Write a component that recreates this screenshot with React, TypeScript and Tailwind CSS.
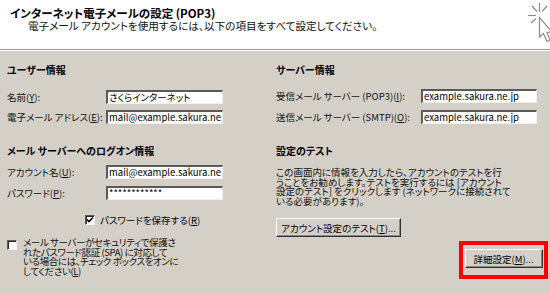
import React from "react";

// Outlook Express style account dialog page (POP3)

function Acc({ children }: { children: React.ReactNode }) {
  return <span className="underline">{children}</span>;
}

function TextBox({ value, width }: { value: string; width: string }) {
  return (
    <div
      className={`${width} h-[14px] bg-white border-t-2 border-l-2 border-t-[#5a5a5a] border-l-[#5a5a5a] border-b border-r border-b-[#f0f0f0] border-r-[#f0f0f0] overflow-hidden whitespace-nowrap pl-[1px] text-[9.5px] leading-[11px] text-black`}
    >
      {value}
    </div>
  );
}

function Field({
  label,
  value,
  labelWidth,
  boxWidth,
}: {
  label: React.ReactNode;
  value: string;
  labelWidth: string;
  boxWidth: string;
}) {
  return (
    <div className="flex items-center h-[14px]">
      <div className={`${labelWidth} shrink-0 whitespace-nowrap text-[9.5px] leading-[14px] text-[#101010]`}>{label}</div>
      <TextBox value={value} width={boxWidth} />
    </div>
  );
}

function CheckBox({ checked }: { checked?: boolean }) {
  return (
    <div className="w-[10px] h-[10px] shrink-0 bg-white border-t border-l border-t-[#5a5a5a] border-l-[#5a5a5a] border-b border-r border-b-[#f4f4f4] border-r-[#f4f4f4] shadow-[inset_1px_1px_0_#2a2a2a] flex items-center justify-center">
      {checked && (
        <svg width="8" height="8" viewBox="0 0 8 8">
          <polyline points="1,3.5 3,5.5 7,1.5" fill="none" stroke="#000" strokeWidth="1.6" />
        </svg>
      )}
    </div>
  );
}

function Button({ children, width }: { children: React.ReactNode; width: string }) {
  return (
    <div
      className={`${width} h-[19px] flex items-center justify-center bg-[#d4d0c8] border border-t-white border-l-white border-b-[#303030] border-r-[#303030] shadow-[inset_-1px_-1px_0_#8a8a8a] text-[9.5px] leading-[12px] text-black whitespace-nowrap`}
    >
      {children}
    </div>
  );
}

function WizardIcon() {
  return (
    <svg width="30" height="46" viewBox="0 0 30 46" className="shrink-0">
      <g stroke="#8c8c8c" strokeWidth="1.2" fill="none">
        <line x1="19.5" y1="3" x2="19.5" y2="12" />
        <line x1="12" y1="6" x2="17" y2="11.5" />
        <line x1="27" y1="6" x2="22" y2="11.5" />
        <line x1="8" y1="15.5" x2="16" y2="15.5" />
        <line x1="11" y1="23" x2="16" y2="18.5" />
        <path d="M19.5 17.5 L19.5 37 L23.5 33.5 L27 41.5 L30 40 L27 32.5 L32 32 Z" fill="#ffffff" />
      </g>
    </svg>
  );
}

export default function App() {
  return (
    <div className="w-[550px] h-[293px] overflow-hidden bg-[#d4d0c8] font-['Noto_Sans_CJK_JP','Noto_Sans',sans-serif] [font-feature-settings:'palt'] text-black">
      {/* header */}
      <div className="h-[50px] bg-white flex justify-between border-b border-b-[#9c9a9c]">
        <div className="pt-[6px]">
          <div className="pl-[10px] text-[11.5px] leading-[14px] font-bold text-black">
            インターネット電子メールの設定 (POP3)
          </div>
          <div className="pl-[28px] text-[10.6px] leading-[13px] text-[#101010] mt-[-1px] whitespace-nowrap">
            電子メール アカウントを使用するには、以下の項目をすべて設定してください。
          </div>
        </div>
        <WizardIcon />
      </div>
      <div className="h-px bg-white" />

      {/* body */}
      <div className="grid grid-cols-[276px_1fr]">
        {/* left column */}
        <div className="pl-[7px] flex flex-col">
          <div className="mt-[12px] h-[14px] text-[10px] leading-[14px] font-bold">ユーザー情報</div>
          <div className="mt-[13px] flex flex-col gap-[6px]">
            <Field
              label={<>名前(<Acc>Y</Acc>):</>}
              value="さくらインターネット"
              labelWidth="w-[99px]"
              boxWidth="w-[117px]"
            />
            <Field
              label={<>電子メール アドレス(<Acc>E</Acc>):</>}
              value="mail@example.sakura.ne.jp"
              labelWidth="w-[99px]"
              boxWidth="w-[117px]"
            />
          </div>

          <div className="mt-[20px] h-[14px] text-[10px] leading-[14px] font-bold">メール サーバーへのログオン情報</div>
          <div className="mt-[7px] flex flex-col gap-[7px]">
            <Field
              label={<>アカウント名(<Acc>U</Acc>):</>}
              value="mail@example.sakura.ne.jp"
              labelWidth="w-[99px]"
              boxWidth="w-[117px]"
            />
            <Field
              label={<>パスワード(<Acc>P</Acc>):</>}
              value="************"
              labelWidth="w-[99px]"
              boxWidth="w-[117px]"
            />
          </div>

          <div className="mt-[14px] pl-[78px] flex items-center gap-[5px] h-[12px]">
            <CheckBox checked />
            <span className="text-[9.5px] leading-[12px]">
              パスワードを保存する(<Acc>R</Acc>)
            </span>
          </div>

          <div className="mt-[12px] flex items-start gap-[6px]">
            <div className="mt-[2px]">
              <CheckBox />
            </div>
            <div className="text-[9.5px] leading-[9.5px] tracking-[-0.4px] whitespace-nowrap text-[#101010]">
              メール サーバーがセキュリティで保護さ
              <br />
              れたパスワード認証 (SPA) に対応して
              <br />
              いる場合には、チェック ボックスをオンに
              <br />
              してください(<Acc>L</Acc>)
            </div>
          </div>
        </div>

        {/* right column */}
        <div className="flex flex-col">
          <div className="mt-[12px] h-[14px] text-[10px] leading-[14px] font-bold">サーバー情報</div>
          <div className="mt-[12px] flex flex-col gap-[7px]">
            <Field
              label={<>受信メール サーバー (POP3)(<Acc>I</Acc>):</>}
              value="example.sakura.ne.jp"
              labelWidth="w-[145px]"
              boxWidth="w-[116px]"
            />
            <Field
              label={<>送信メール サーバー (SMTP)(<Acc>O</Acc>):</>}
              value="example.sakura.ne.jp"
              labelWidth="w-[145px]"
              boxWidth="w-[116px]"
            />
          </div>

          <div className="mt-[20px] h-[14px] text-[10px] leading-[14px] font-bold">設定のテスト</div>
          <div className="mt-[10px] text-[9.5px] leading-[9.5px] whitespace-nowrap text-[#101010]">
            この画面内に情報を入力したら、アカウントのテストを行
            <br />
            うことをお勧めします。テストを実行するには [アカウント
            <br />
            設定のテスト] をクリックします (ネットワークに接続されて
            <br />
            いる必要があります)。
          </div>

          <div className="mt-[12px]">
            <Button width="w-[125px]">
              アカウント設定のテスト(<Acc>T</Acc>)...
            </Button>
          </div>

          <div className="mt-[4px] self-end mr-[2px] w-[89px] h-[38px] border-4 border-[#ff0000] flex items-start justify-center pt-[4px]">
            <Button width="w-[78px]">
              詳細設定(<Acc>M</Acc>)...
            </Button>
          </div>
        </div>
      </div>
    </div>
  );
}
